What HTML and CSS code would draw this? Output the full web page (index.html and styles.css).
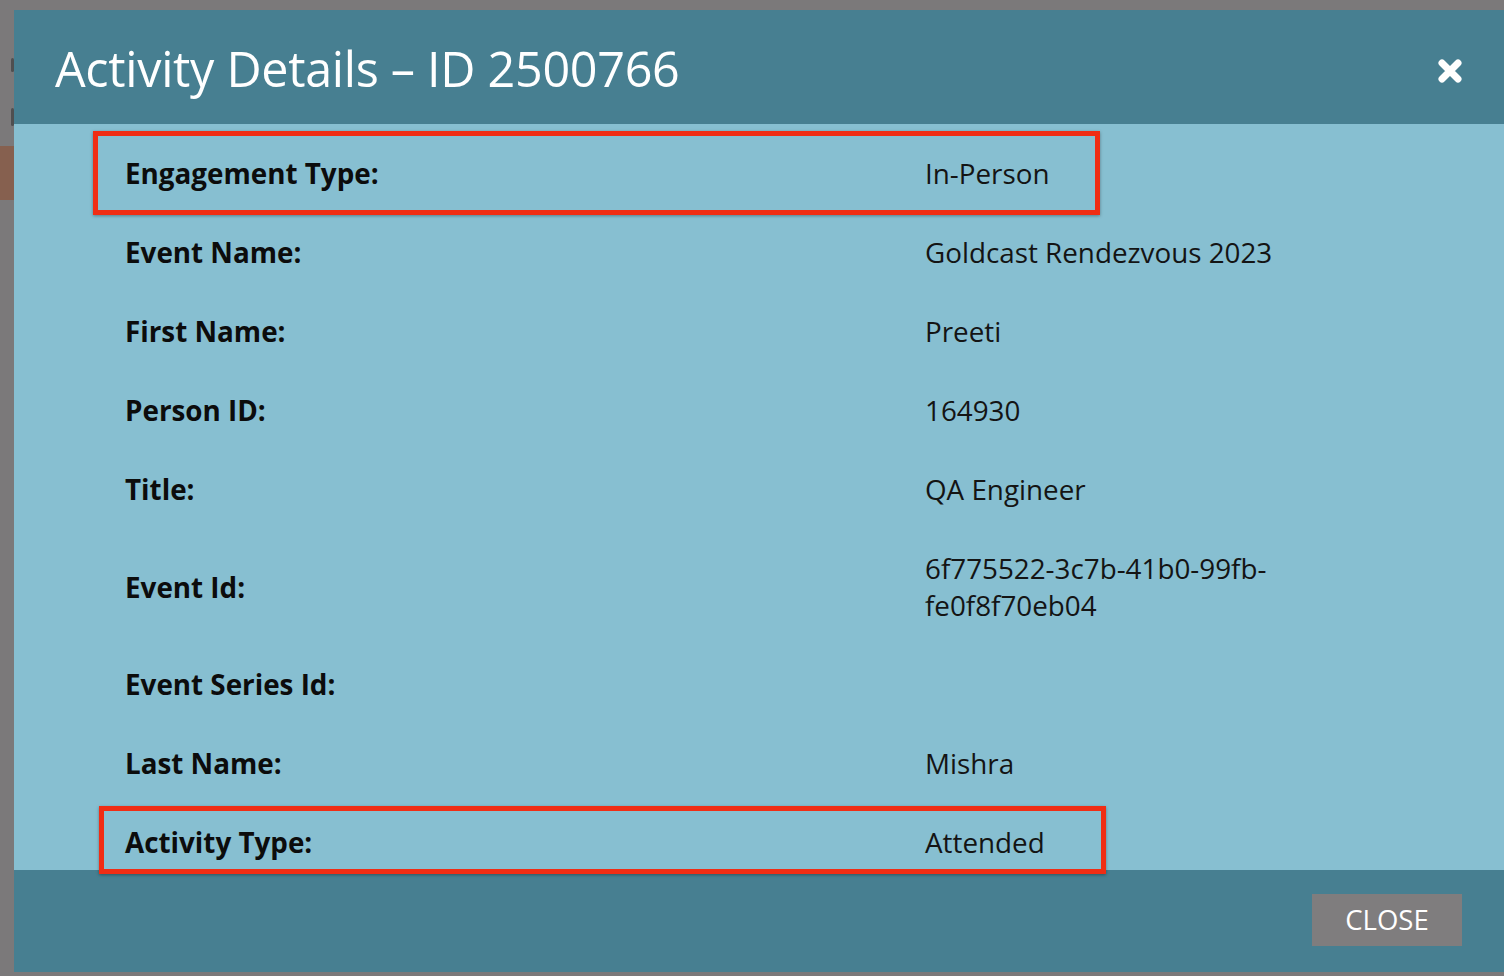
FILE: index.html
```html
<!DOCTYPE html>
<html>
<head>
<meta charset="utf-8">
<link rel="stylesheet" href="styles.css">
</head>
<body>
<div class="page">
  <aside class="backdrop">
    <span class="ghost ghost-a"></span>
    <span class="ghost ghost-b"></span>
    <span class="backdrop-tab"></span>
  </aside>
  <div class="modal">
    <header class="modal-header">
      <h1 class="modal-title">Activity Details – ID 2500766</h1>
      <button class="icon-close" aria-label="Close">
        <svg width="30" height="30" viewBox="0 0 30 30"><path d="M7 7 L23 23 M23 7 L7 23" stroke="#fff" stroke-width="7" stroke-linecap="round"/></svg>
      </button>
    </header>
    <div class="modal-body">
      <div class="details">
        <div class="row"><div class="label">Engagement Type:</div><div class="value">In-Person</div><span class="mark mark-1"></span></div>
        <div class="row"><div class="label">Event Name:</div><div class="value">Goldcast Rendezvous 2023</div></div>
        <div class="row"><div class="label">First Name:</div><div class="value">Preeti</div></div>
        <div class="row"><div class="label">Person ID:</div><div class="value">164930</div></div>
        <div class="row"><div class="label">Title:</div><div class="value">QA Engineer</div></div>
        <div class="row"><div class="label">Event Id:</div><div class="value">6f775522-3c7b-41b0-99fb-fe0f8f70eb04</div></div>
        <div class="row"><div class="label">Event Series Id:</div><div class="value"></div></div>
        <div class="row"><div class="label">Last Name:</div><div class="value">Mishra</div></div>
        <div class="row"><div class="label">Activity Type:</div><div class="value">Attended</div><span class="mark mark-2"></span></div>
      </div>
    </div>
    <footer class="modal-footer">
      <button class="btn-close">CLOSE</button>
    </footer>
  </div>
</div>
</body>
</html>
```

FILE: styles.css
```css
html, body {
  margin: 0;
  padding: 0;
  width: 1504px;
  height: 976px;
  overflow: hidden;
  background: #7b797a;
  font-family: "Open Sans", "Noto Sans", sans-serif;
}
.page {
  display: flex;
  height: 976px;
}
.backdrop {
  position: relative;
  width: 14px;
  flex: none;
}
.backdrop-tab {
  position: absolute;
  left: 0;
  top: 146px;
  width: 14px;
  height: 54px;
  background: #86604f;
}
.ghost {
  position: absolute;
  left: 11px;
  width: 3px;
  background: #3d3d3f;
  border-radius: 2px;
}
.ghost-a { top: 58px; height: 14px; opacity: 0.7; }
.ghost-b { top: 108px; height: 18px; opacity: 0.7; }
.modal {
  margin-top: 10px;
  width: 1490px;
  height: 962px;
  display: flex;
  flex-direction: column;
  background: #87bfd1;
}
.modal-header {
  height: 114px;
  flex: none;
  background: #477f91;
  display: flex;
  align-items: center;
  justify-content: space-between;
  padding: 0 39px 0 41px;
  box-sizing: border-box;
}
.modal-title {
  margin: 0;
  color: #fff;
  font-weight: 400;
  font-size: 48.5px;
  letter-spacing: -0.3px;
  line-height: 1;
  padding-top: 2px;
}
.icon-close {
  background: none;
  border: 0;
  padding: 0;
  width: 30px;
  height: 30px;
  display: flex;
  margin-top: 8px;
}
.modal-body {
  height: 746px;
  flex: none;
  background: #87bfd1;
  padding: 10px 0 0 111px;
  box-sizing: border-box;
}
.details {
  display: flex;
  flex-direction: column;
}
.row {
  position: relative;
  display: grid;
  grid-template-columns: 800px 360px;
  align-items: center;
  padding: 21px 0;
  font-size: 27.8px;
  line-height: 37px;
  color: #141414;
}
.label {
  font-weight: 700;
  color: #0c0c0c;
}
.value {
  font-weight: 400;
}
.mark {
  position: absolute;
  border: 5px solid #f02d14;
  box-shadow: 0 1px 3px rgba(0,0,0,0.35);
  box-sizing: border-box;
  pointer-events: none;
  z-index: 2;
}
.mark-1 {
  left: -32px;
  top: -3px;
  width: 1007px;
  height: 84px;
}
.mark-2 {
  left: -26px;
  top: 3px;
  width: 1007px;
  height: 68px;
}
.modal-footer {
  height: 102px;
  flex: none;
  background: #477f91;
  display: flex;
  justify-content: flex-end;
  align-items: flex-start;
  padding: 24px 42px 0 0;
  box-sizing: border-box;
}
.btn-close {
  width: 150px;
  height: 52px;
  background: #7f7d7e;
  color: #fff;
  border: 0;
  font-family: "Open Sans", "Noto Sans", sans-serif;
  font-size: 27.5px;
  font-weight: 400;
  padding: 0;
  line-height: 52px;
}
```
